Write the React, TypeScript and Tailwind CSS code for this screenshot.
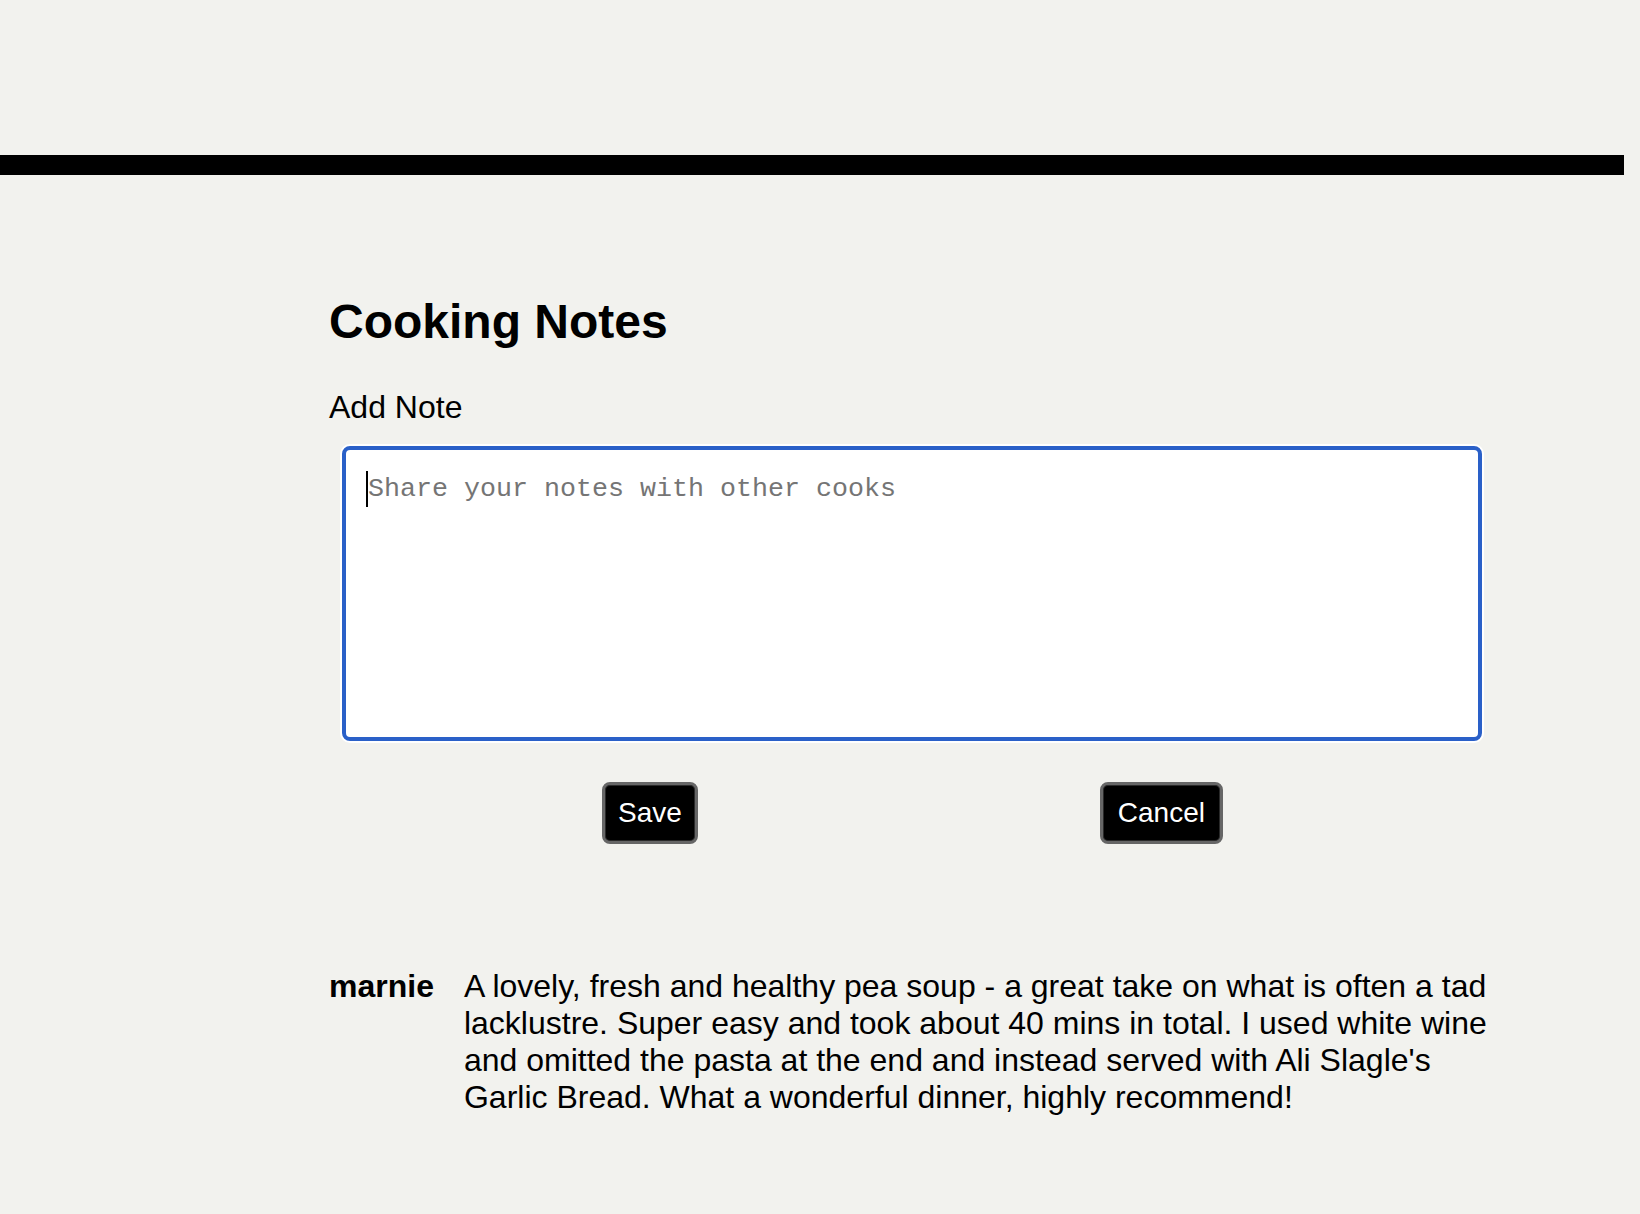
import { useState } from 'react'

const NOTE =
  "A lovely, fresh and healthy pea soup - a great take on what is often a tad lacklustre. Super easy and took about 40 mins in total. I used white wine and omitted the pasta at the end and instead served with Ali Slagle's Garlic Bread. What a wonderful dinner, highly recommend!"

export default function App() {
  const [draft, setDraft] = useState('')

  return (
    <div className="min-h-[1214px] bg-[#f2f2ee] pt-[155px] pb-24 font-['Liberation_Sans',Arial,sans-serif] text-black">
      {/* top rule */}
      <div className="h-[20px] w-[1624px] bg-black" />

      <section className="ml-[329px] mt-[119px] w-[1166px]">
        <h2 className="text-[48px] font-bold leading-[55px]">Cooking Notes</h2>

        <label htmlFor="note" className="mt-[40px] block text-[32px] leading-[37px]">
          Add Note
        </label>

        <div className="relative mx-[13px] mt-[20px]">
          <textarea
            id="note"
            value={draft}
            onChange={(e) => setDraft(e.target.value)}
            placeholder="Share your notes with other cooks"
            className="block h-[295px] w-full resize-none rounded-lg border-4 border-[#2a60c8] bg-white pl-[22px] pr-4 pt-[24px] font-['Liberation_Mono','Courier_New',monospace] text-[26.67px] leading-[30px] text-black shadow-[0_0_0_2px_#ffffff] outline-none placeholder:text-[#757575]"
          />
          {/* caret */}
          {draft === '' && (
            <span className="pointer-events-none absolute left-[24px] top-[25px] h-[36px] w-[2px] bg-black" />
          )}
        </div>

        <div className="mx-auto mt-[41px] flex w-[1023px] justify-around">
          <button className="flex h-[62px] items-center rounded-lg border-[3px] border-[#666666] bg-black px-[13.5px] text-[28px] text-white shadow-[inset_0_0_0_1px_#2a2a2a]">
            Save
          </button>
          <button
            onClick={() => setDraft('')}
            className="flex h-[62px] items-center rounded-lg border-[3px] border-[#666666] bg-black px-[14.5px] text-[28px] text-white shadow-[inset_0_0_0_1px_#2a2a2a]"
          >
            Cancel
          </button>
        </div>

        <div className="mt-[124px] flex gap-[30px] text-[32px] leading-[37px]">
          <div className="shrink-0 font-bold">marnie</div>
          <p className="flex-1">{NOTE}</p>
        </div>
      </section>
    </div>
  )
}
